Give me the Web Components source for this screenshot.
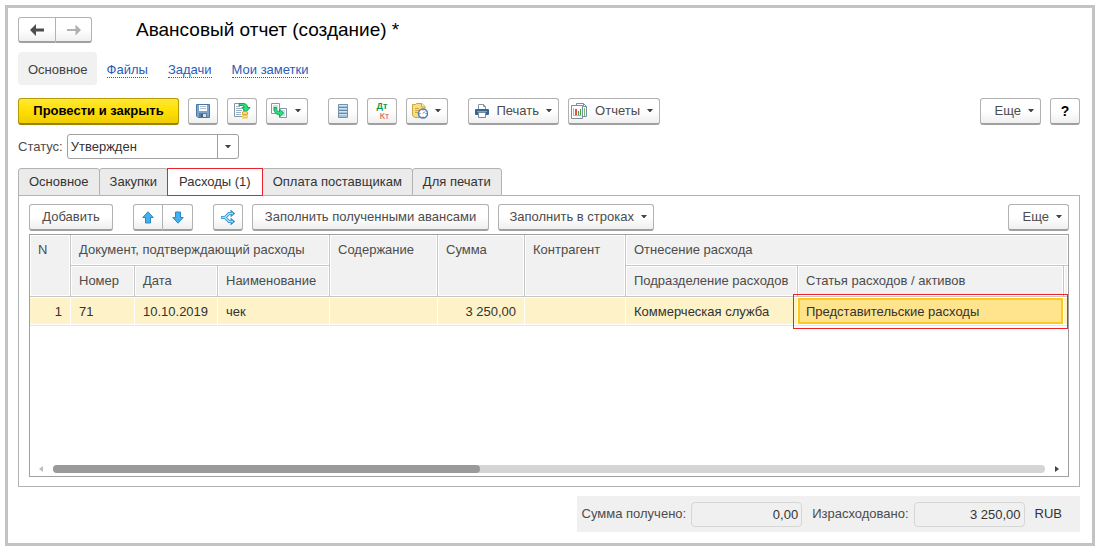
<!DOCTYPE html>
<html lang="ru">
<head>
<meta charset="utf-8">
<title>Авансовый отчет (создание)</title>
<style>
  html, body { margin: 0; height: 100%; }
  body { font: 13px/16px "Liberation Sans", Arial, sans-serif; color: #4c4c4c; background: #fff; }
</style>
</head>
<body>
<expense-report></expense-report>

<script>
const define = (name, html, setup) => {
  const template = document.createElement('template');
  template.innerHTML = `<style>*{box-sizing:border-box}</style>${html}`;
  customElements.define(name, class extends HTMLElement {
    constructor() {
      super();
      this.attachShadow({ mode: 'open' }).append(template.content.cloneNode(true));
    }
    connectedCallback() { if (setup) setup(this, this.shadowRoot); }
  });
};

const svg = (w, h, body) =>
  `<svg width="${w}" height="${h}" viewBox="0 0 ${w} ${h}" fill="none" aria-hidden="true">${body}</svg>`;

const icons = {
  back: svg(14, 12, '<path d="M0 6 6 0v4.500h8v3H6V12z" fill="#4d4d4d"/>'),
  forward: svg(14, 12, '<path d="M14 6 8.500.500V5H0v2h8.500v4.500z" fill="#b0b0b0"/>'),
  caret: svg(6, 4, '<path d="M0 0h6L3.500 3h-1z" fill="#444"/>'),
  save: svg(14, 14, '<path d="M.5.5h13v13H2L.5 12z" fill="#7ba4cc" stroke="#4b769f"/><path d="M3 1h8v6H3z" fill="#fff"/><path d="M4 2.500h6M4 4.500h6" stroke="#a9bfd3"/><path d="M3 9h8v4H3z" fill="#5f7d9a"/><path d="M5 10h5v3H5z" fill="#d6dfe6"/><path d="M5 10h2v3H5z" fill="#47637f"/>'),
  post: svg(18, 18, '<path d="M1.500 1.500h9v13h-9z" fill="#fff" stroke="#8697a8"/><path d="M3 4.500h4M3 6.500h6M3 8.500h6M3 10.500h5M3 12.500h5" stroke="#9eb0c1"/><path d="M6 1.500h4c3 0 4.500 1.500 4.500 4H17l-4 4.500-4-4.500h2c0-1.500-.5-2-2-2H6z" fill="#28e07d" stroke="#0fa35a"/><path d="M9 11v4.500c0 2 6 2 6 0V11z" fill="#f0be3c"/><ellipse cx="12" cy="11" rx="3" ry="1.500" fill="#ffe491" stroke="#d8a326"/><path d="M9 13.500c1 1.200 5 1.200 6 0M9 15.500c1 1.200 5 1.200 6 0" stroke="#ffe9a5"/>'),
  based: svg(18, 18, '<path d="M1.500 1.500h8v10h-8z" fill="#fff" stroke="#8697a8"/><path d="M3 4h5M3 6h5M3 8h3" stroke="#a9b8c6"/><path d="M9.500 6.500h7v9h-7z" fill="#fff" stroke="#8697a8"/><path d="M12 9h3M12 11h3M11 13h4" stroke="#a9b8c6"/><path d="M4 5.500h2.500c0 3 1 4 3 4V7l4 4-4 4v-2.500C5.500 12.500 4 10 4 5.500z" fill="#28e07d" stroke="#0fa35a"/>'),
  list: svg(10, 14, '<path d="M.5.5h9v13h-9z" fill="#a7c4dd" stroke="#6f93b0"/><path d="M1 3.500h8M1 6.500h8M1 9.500h8" stroke="#6589a6"/><path d="M1 1.500h8M1 4.500h8M1 7.500h8M1 10.500h8" stroke="#d3e3ef"/>'),
  schedule: svg(16, 16, '<path d="M.5 1.500h3l1-1H10l3 3v11H3l-2.500-2z" fill="#f8dd83" stroke="#cda53b"/><path d="M9.500.500V4H13" fill="#fff1bb" stroke="#cda53b"/><path d="M3 5.500h4M3 7.500h4M3 9.500h3" stroke="#d0aa45"/><circle cx="11" cy="10.500" r="4.500" fill="#fff" stroke="#4f7fb5" stroke-width="1.500"/><path d="M11 10.500 13 8.500" stroke="#3e72ab"/><path d="M10.500 7h1M10.500 14h1M7.500 10.500h1M13.500 10.500h1" stroke="#e6333d"/>'),
  print: svg(14, 14, '<path d="M3.500 5V.500h5l2 2V5" fill="#fff" stroke="#8395a7"/><path d="M8.500.500v2h2" stroke="#8395a7"/><rect y="5" width="14" height="6" rx="1" fill="#39648d"/><path d="M2 7.500h10" stroke="#7da2c3"/><path d="M3.500 8.500h7v5h-7z" fill="#fff" stroke="#718aa1"/>'),
  report: svg(17, 17, '<path d="M5.500.5h7l3 3v10h-10z" fill="#fff" stroke="#7c8f9f"/><path d="M12.500.5v3h3" stroke="#7c8f9f"/><path d="M.5 2.500h11v13H.5z" fill="#fff" stroke="#7c8f9f"/><path d="M2.500 5v7.500h8" stroke="#a8b4c0"/><path d="M4 6h2v6H4z" fill="#ec4b45"/><path d="M7 8h1v4H7z" fill="#47a746"/><path d="M9 6h1v6H9z" fill="#47a746"/><path d="M13.500 5v8" stroke="#72bb6a"/>'),
  up: svg(12, 13, '<path d="M6 .8 11.200 6.500H8.500v5.500h-5V6.500H.8z" fill="#41b1f2" stroke="#2f86bf"/>'),
  down: svg(12, 13, '<path d="M6 12.200 11.200 6.500H8.500V1h-5v5.500H.8z" fill="#41b1f2" stroke="#2f86bf"/>'),
  split: svg(16, 15, '<path d="M1 7.500h4L9 3.500h3M5 7.500l4 4h3" stroke="#2b8cc6" stroke-width="3"/><path d="m10.500.500 3.500 3-3.500 3M10.500 8.500l3.500 3-3.500 3" stroke="#2b8cc6" stroke-width="1.500"/><path d="M1.500 7.500H5L9 3.500h4M5 7.500l4 4h4" stroke="#a3dffd" stroke-width="1.500"/>')
};

define('ui-icon', `
  <style>
    :host { display: inline-flex; flex: none; }
    svg { display: block; }
  </style>`,
  (host, root) => root.append(document.createRange().createContextualFragment(icons[host.getAttribute('name')])));

define('ui-button', `
  <style>
    :host { display: flex; flex: none; }
    button {
      display: flex; align-items: center; justify-content: center; gap: 7px; width: 100%;
      height: 27px; margin: 0; padding: 0 6px; font: inherit; color: inherit; white-space: nowrap;
      border: 1px solid #b2b2b2; border-bottom: 2px solid #a0a0a0; border-radius: 3px;
      background: linear-gradient(#fff 50%, #efefef);
    }
    :host([menu]) button { justify-content: flex-end; }
    :host([primary]) button {
      color: #000; font-weight: bold; border-color: #b79b00 #b79b00 #988200;
      background: linear-gradient(#ffe838, #ffdf00 50%, #efcd00);
    }
    :host([joined="start"]) button { height: 26px; border-radius: 3px 0 0 3px; }
    :host([joined="end"]) button { height: 26px; border-left-width: 0; border-radius: 0 3px 3px 0; }
    :host([joined][tall]) button { height: 27px; }
  </style>
  <button type="button"><slot></slot></button>`,
  (host, root) => {
    if (host.title) root.querySelector('button').setAttribute('aria-label', host.title);
    if (host.hasAttribute('menu')) {
      const caret = document.createElement('ui-icon');
      caret.setAttribute('name', 'caret');
      root.querySelector('button').append(caret);
    }
    if (host.hasAttribute('width')) host.style.width = host.getAttribute('width') + 'px';
  });

define('report-nav', `
  <style>
    :host { display: flex; align-items: center; gap: 20px; }
    a { margin-top: 3px; color: #2b5bb8; text-decoration: none; border-bottom: 1px dotted #2b5bb8; line-height: 14px; }
    a.current { margin: 0 -10px 0 0; padding: 2px 9px 0 10px; line-height: 31px; border: 0; border-radius: 4px; color: #404040; background: #f1f1f1; }
  </style>
  <a class="current" href="#main">Основное</a><a href="#files">Файлы</a><a href="#tasks">Задачи</a><a href="#notes">Мои заметки</a>`);

define('status-select', `
  <style>
    :host { display: flex; align-items: center; gap: 4px; }
    div { display: grid; width: 172px; }
    select, span { grid-area: 1 / 1; }
    select { appearance: none; height: 25px; margin: 0; padding: 0 3px; font: inherit; color: #333; border: 1px solid #a0a0a0; border-radius: 3px; background: #fff; }
    span { justify-self: end; display: flex; align-items: center; justify-content: center; width: 21px; margin: 1px; border-left: 1px solid #a0a0a0; pointer-events: none; }
  </style>
  <label for="status">Статус:</label>
  <div>
    <select id="status"><option>Утвержден</option></select>
    <span><ui-icon name="caret"></ui-icon></span>
  </div>`);

define('report-tabs', `
  <style>
    :host { display: flex; }
    button {
      height: 28px; margin: 0 0 0 -1px; padding: 0 10px; font: inherit; color: #333;
      border: 1px solid #b2b2b2; border-radius: 3px 3px 0 0; background: #ebebeb;
    }
    button:first-of-type { margin-left: 0; }
    button[aria-selected=true] { z-index: 1; padding: 0 11px; border-color: #ee2029; border-radius: 0; background: #fff; }
  </style>
  <button role="tab">Основное</button><button role="tab">Закупки</button><button role="tab" aria-selected="true">Расходы (1)</button><button role="tab">Оплата поставщикам</button><button role="tab">Для печати</button>`,
  (host) => host.setAttribute('role', 'tablist'));

define('expense-table', `
  <style>
    :host { display: flex; flex-direction: column; border: 1px solid #a0a0a0; background: #fff; }
    table { width: 100%; table-layout: fixed; border-spacing: 0; }
    th, td { padding: 0 8px; text-align: left; font-weight: normal; white-space: nowrap; }
    th {
      height: 31px; vertical-align: top; line-height: 30px; background: #f1f1f1;
      border: 0 solid #c6c6c6; border-width: 0 1px 1px 0; box-shadow: inset 0 0 0 1px #fff;
    }
    th:last-child { border-right: 0; }
    td {
      height: 29px; padding-top: 2px; color: #333; background: #fdf2c8; border-right: 1px solid #fff;
      border-bottom: 1px solid #e4e4e4; box-shadow: inset 0 1px #fff, inset 0 -1px #fff;
    }
    td.number { text-align: right; }
    td.active {
      position: relative; background: #ffe48d;
      box-shadow: inset 0 1px #fff, inset 0 -1px #fff, inset 0 3px #fec91f, inset 0 -3px #fec91f, inset 0 0 0 2px #fec91f;
    }
    td.active::after { content: ""; position: absolute; inset: -3px -5px -4px -5px; border: 1px solid #ee2029; }
    .blank { padding: 0; }
    .space { flex: 1; }
    .scroll { display: flex; align-items: center; height: 15px; padding: 0 8px; gap: 9px; }
    .track { flex: 1; height: 8px; border-radius: 4px; background: #d5d5d5; }
    .thumb { width: 43%; height: 8px; border-radius: 4px; background: #9a9a9a; }
    svg { display: block; }
  </style>
  <table>
    <colgroup><col width="41"><col width="64"><col width="83"><col width="112"><col width="108"><col width="87"><col width="101"><col width="172"><col><col width="4"></colgroup>
    <thead>
      <tr><th rowspan="2">N</th><th colspan="3">Документ, подтверждающий расходы</th><th rowspan="2">Содержание</th><th rowspan="2">Сумма</th><th rowspan="2">Контрагент</th><th colspan="3">Отнесение расхода</th></tr>
      <tr><th>Номер</th><th>Дата</th><th>Наименование</th><th>Подразделение расходов</th><th>Статья расходов / активов</th><th class="blank"></th></tr>
    </thead>
    <tbody>
      <tr><td class="number">1</td><td>71</td><td>10.10.2019</td><td>чек</td><td></td><td class="number">3 250,00</td><td></td><td>Коммерческая служба</td><td class="active">Представительские расходы</td><td class="blank"></td></tr>
    </tbody>
  </table>
  <div class="space"></div>
  <div class="scroll">
    <svg width="6" height="6" viewBox="0 0 6 6"><path d="M5 0v6L1 3z" fill="#bdbdbd"/></svg>
    <div class="track"><div class="thumb"></div></div>
    <svg width="6" height="6" viewBox="0 0 6 6"><path d="M1 0v6l4-3z" fill="#444"/></svg>
  </div>`);

define('total-field', `
  <style>
    :host { display: flex; align-items: center; gap: 5px; }
    input { width: 111px; height: 25px; margin: 0; padding: 0 3px; font: inherit; text-align: right; color: #333; border: 1px solid #d6d6d6; border-radius: 4px; background: #f0f0f0; }
  </style>
  <label for="value"></label><input id="value" readonly>`,
  (host, root) => {
    root.querySelector('label').textContent = host.getAttribute('label');
    root.querySelector('input').value = host.getAttribute('value');
  });

define('expense-report', `
  <style>
    :host { display: flex; min-height: 100%; padding: 5px 3px 6px 5px; box-sizing: border-box; }
    main { flex: 1; min-width: 0; display: flex; flex-direction: column; border: 3px solid #c3c3c3; padding: 9px 12px 11px 10px; }
    header, .bar, .group, footer { display: flex; align-items: center; }
    header { gap: 44px; }
    h1 { margin: 0; font-size: 19px; line-height: 26px; font-weight: normal; color: #000; }
    report-nav { margin: 9px 0 13px; }
    .bar { gap: 9px; }
    .gap { margin-left: 11px; }
    .end { margin-left: auto; }
    .help { color: #000; font-size: 14px; font-weight: bold; }
    status-select { margin: 9px 0; }
    section { flex: 1; display: flex; flex-direction: column; margin-top: -1px; padding: 8px 10px 9px; border: 1px solid #b2b2b2; }
    report-tabs { position: relative; z-index: 1; }
    expense-table { flex: 1; margin-top: 3px; }
    footer { align-self: flex-end; gap: 10px; height: 36px; margin-top: 9px; padding: 0 18px 0 5px; background: #f0f0f0; }
    .currency { color: #333; }
    .dtkt { display: flex; flex-direction: column; font-size: 9px; line-height: 10px; }
    .dt { color: #0a9850; font-weight: bold; }
    .kt { color: #e34848; padding-left: 5px; }
  </style>
  <main>
    <header>
      <div class="group">
        <ui-button joined="start" width="38" title="Назад"><ui-icon name="back"></ui-icon></ui-button>
        <ui-button joined="end" width="36" title="Вперед"><ui-icon name="forward"></ui-icon></ui-button>
      </div>
      <h1>Авансовый отчет (создание) *</h1>
    </header>
    <report-nav></report-nav>
    <div class="bar">
      <ui-button primary width="161">Провести и закрыть</ui-button>
      <ui-button width="30" title="Записать"><ui-icon name="save"></ui-icon></ui-button>
      <ui-button width="30" title="Провести"><ui-icon name="post"></ui-icon></ui-button>
      <ui-button width="42" title="Создать на основании" menu><ui-icon name="based"></ui-icon></ui-button>
      <ui-button class="gap" width="30" title="Реестр"><ui-icon name="list"></ui-icon></ui-button>
      <ui-button width="30" title="Проводки"><span class="dtkt"><span class="dt">Дт</span><span class="kt">Кт</span></span></ui-button>
      <ui-button width="42" title="Задача" menu><ui-icon name="schedule"></ui-icon></ui-button>
      <ui-button class="gap" width="91" menu><ui-icon name="print"></ui-icon>Печать</ui-button>
      <ui-button width="92" menu><ui-icon name="report"></ui-icon>Отчеты</ui-button>
      <ui-button class="end" width="61" menu>Еще</ui-button>
      <ui-button class="help" width="30">?</ui-button>
    </div>
    <status-select></status-select>
    <report-tabs></report-tabs>
    <section>
      <div class="bar">
        <ui-button width="84">Добавить</ui-button>
        <div class="group gap">
          <ui-button joined="start" tall width="30" title="Вверх"><ui-icon name="up"></ui-icon></ui-button>
          <ui-button joined="end" tall width="30" title="Вниз"><ui-icon name="down"></ui-icon></ui-button>
        </div>
        <ui-button class="gap" width="30" title="Разбить"><ui-icon name="split"></ui-icon></ui-button>
        <ui-button width="237">Заполнить полученными авансами</ui-button>
        <ui-button width="156" menu>Заполнить в строках</ui-button>
        <ui-button class="end" width="61" menu>Еще</ui-button>
      </div>
      <expense-table></expense-table>
    </section>
    <footer>
      <total-field label="Сумма получено:" value="0,00"></total-field>
      <total-field label="Израсходовано:" value="3 250,00"></total-field>
      <span class="currency">RUB</span>
    </footer>
  </main>`);
</script>
</body>
</html>
